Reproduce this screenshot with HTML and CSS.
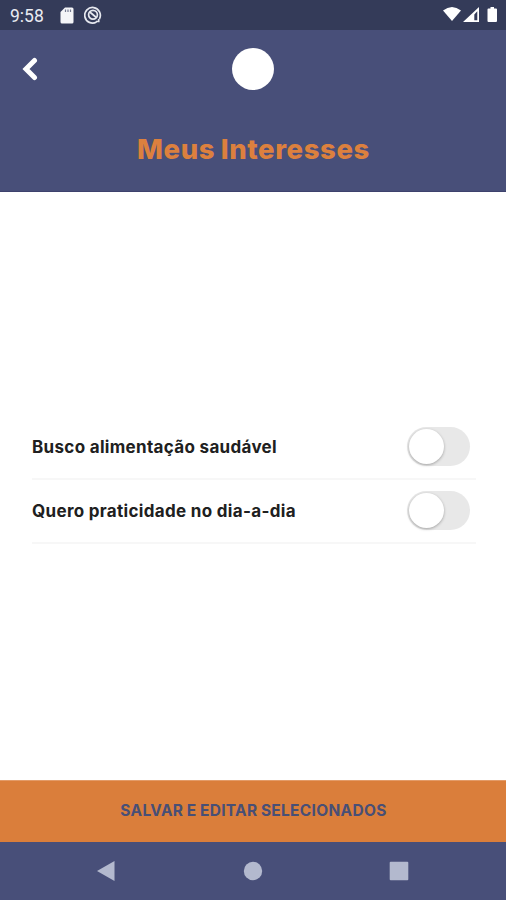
FILE: index.html
```html
<!DOCTYPE html>
<html lang="pt-BR">
<head>
<meta charset="utf-8">
<title>Meus Interesses</title>
<link rel="stylesheet" href="styles.css">
</head>
<body>
<div class="screen">
  <div class="status">
    <span class="clock">9:58</span>
    <svg class="card-icon" width="14" height="17" viewBox="0 0 14 17"><path fill="#f4f5f8" d="M5 .5h7q1.500 0 1.500 1.500v13q0 1.500-1.500 1.500H2Q.5 16.500.5 15V5z"/><path stroke="#747a91" stroke-width="1.200" d="M5.500 2.500V5M8 2.500V5M10.500 2.500V5"/></svg>
    <svg class="sync-icon" width="18" height="18" viewBox="0 0 18 18" fill="none" stroke="#e6e8ef"><path stroke-width="1.700" d="M15.400 13A7.800 7.800 0 1 0 12.500 16"/><circle cx="9" cy="8.700" r="4.400" stroke-width="1.700"/><path stroke-width="1.700" d="M5.800 6l6.500 5.500M12 15.500h2.700V13"/></svg>
    <svg class="signals" width="56" height="18" viewBox="0 0 56 18" fill="#fff"><path d="M1 4.500Q10-2.500 19 4.500L10 15z"/><path fill-rule="evenodd" d="M37 1v15H21zM35.300 5.300v9h-3V8.500z"/><path d="M46.500 2.500h2V1h3.500v1.500h2q1 0 1 1V15q0 1-1 1h-7.500q-1 0-1-1V3.500q0-1 1-1z"/></svg>
  </div>
  <header class="header">
    <div class="toolbar">
      <svg class="back" width="18" height="24" viewBox="0 0 18 24"><path d="M13.500 3.500L5 12l8.500 8.500" fill="none" stroke="#fff" stroke-width="5" stroke-linecap="round" stroke-linejoin="miter"/></svg>
      <div class="avatar"></div>
    </div>
    <h1 class="title">Meus Interesses</h1>
  </header>
  <main class="content">
    <div class="row"><span class="label">Busco alimentação saudável</span><span class="switch"><span class="knob"></span></span></div>
    <div class="row"><span class="label">Quero praticidade no dia-a-dia</span><span class="switch"><span class="knob"></span></span></div>
  </main>
  <button class="save">SALVAR E EDITAR SELECIONADOS</button>
  <nav class="nav">
    <svg width="20" height="22" viewBox="0 0 20 22"><path fill="#b3b9ce" d="M18.500 1v20L1 11z"/></svg>
    <svg width="20" height="22" viewBox="0 0 20 22"><circle cx="10" cy="11" r="9.200" fill="#b3b9ce"/></svg>
    <svg width="20" height="22" viewBox="0 0 20 22"><rect x=".7" y="1.700" width="18.600" height="18.600" rx="1" fill="#b3b9ce"/></svg>
  </nav>
</div>
</body>
</html>
```
FILE: styles.css
```css
* { box-sizing: border-box; }
body { margin: 0; background: #fff; font-family: Inter, sans-serif; }
.screen { width: 506px; height: 900px; display: flex; flex-direction: column; }
.status { height: 30px; background: #343b59; display: flex; align-items: center; padding: 0 8px 0 10px; }
.clock { width: 50px; padding-top: 2px; font: 400 17.5px/30px Roboto, sans-serif; color: #e9ebf2; white-space: nowrap; }
.card-icon { margin-right: 10px; }
.signals { margin-left: auto; }
.header { height: 162px; background: #484f79; border-bottom: 1px solid #3e426d; }
.toolbar { height: 78px; display: grid; grid-template-columns: 1fr 42px 1fr; align-items: center; padding: 0 22px 0 21px; }
.avatar { width: 42px; height: 42px; border-radius: 50%; background: #fff; }
.title { margin: 23px 0 0; padding-left: 1px; text-align: center; font-size: 27.5px; line-height: 36px; font-weight: 800; letter-spacing: .6px; word-spacing: -1px; color: #dc803e; }
.content { flex: 1; padding: 224px 30px 0 32px; }
.row { height: 64px; display: flex; align-items: center; justify-content: space-between; border-bottom: 2px solid #f7f7f7; padding-right: 5px; }
.label { padding-bottom: 1px; font-size: 17px; font-weight: 700; letter-spacing: .32px; color: #202020; white-space: nowrap; }
.switch { width: 63px; height: 39px; margin: 0 1px 1px 0; border-radius: 20px; background: #e8e8e8; padding: 2px; }
.knob { display: block; width: 35px; height: 35px; border-radius: 50%; background: #fff; box-shadow: 0 1px 3px rgba(0,0,0,.3); }
.save { height: 62px; border: 0; border-top: 1px solid #e39b68; background: #da7e3b; padding: 0 0 1px 1px; font: 700 15.5px/20px Inter, sans-serif; letter-spacing: .3px; word-spacing: -.5px; color: #484f76; }
.nav { height: 58px; background: #484f79; display: flex; justify-content: space-between; align-items: center; padding: 0 97px 0 96px; }
```
